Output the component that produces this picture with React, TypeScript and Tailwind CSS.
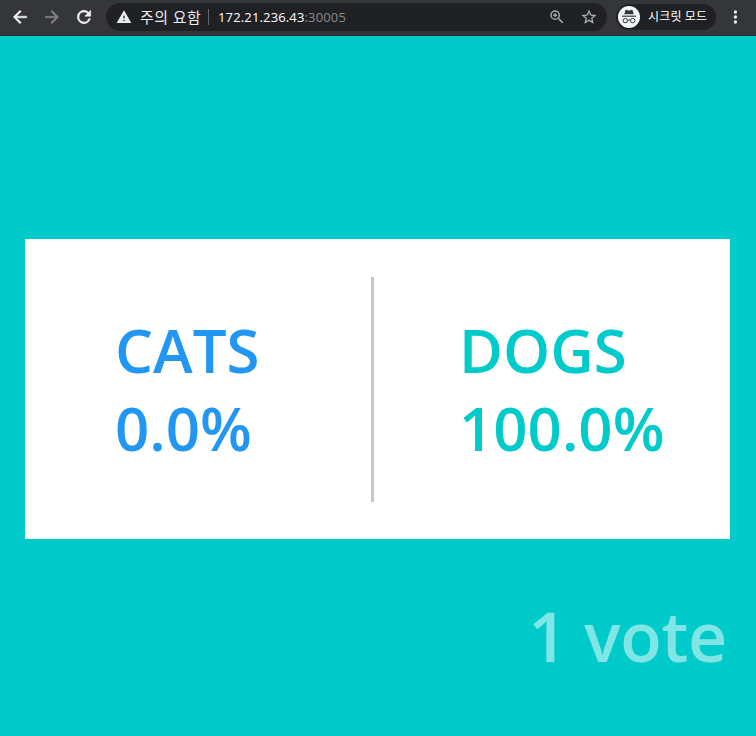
import type { ReactNode } from "react";

const chromeFont = "font-['Open_Sans','Noto_Sans_CJK_KR',sans-serif]";

function Icon({ size, className = "", children }: { size: number; className?: string; children: ReactNode }) {
  return (
    <svg width={size} height={size} viewBox="0 0 24 24" fill="currentColor" className={`block shrink-0 ${className}`}>
      {children}
    </svg>
  );
}

function IncognitoAvatar() {
  return (
    <svg width="22" height="22" viewBox="0 0 22 22" className="block shrink-0">
      <circle cx="11" cy="11" r="11" fill="#f1f3f4" />
      <path d="M7.300 4.600q.3-.9 1.200-.7l2.500.6 2.500-.6q.9-.2 1.200.7L15.700 8.200H6.300z" fill="#35363a" />
      <path d="M4 9.600h14v1.200H4z" fill="#35363a" />
      <g fill="none" stroke="#35363a" strokeWidth="1">
        <circle cx="7.300" cy="14.600" r="2.200" />
        <circle cx="14.700" cy="14.600" r="2.200" />
        <path d="M9.500 14.300q1.500-.8 3 0" />
      </g>
    </svg>
  );
}

function Toolbar() {
  return (
    <header className={`flex h-9 shrink-0 items-start border-b border-[#28292c] bg-[#35363a] pt-[3px] ${chromeFont}`}>
      <div className="flex h-7 w-[106px] items-center gap-3 pl-[10px] text-[#f1f3f4]">
        <Icon size={20}><path stroke="currentColor" strokeWidth=".6" d="M20 11H7.830l5.590-5.590L12 4l-8 8 8 8 1.410-1.410L7.830 13H20z" /></Icon>
        <Icon size={20} className="text-[#85868a]"><path stroke="currentColor" strokeWidth=".4" d="M12 4l-1.410 1.410L16.170 11H4v2h12.170l-5.580 5.590L12 20l8-8z" /></Icon>
        <Icon size={20}><path stroke="currentColor" strokeWidth=".7" d="M17.650 6.350A7.960 7.960 0 0 0 12 4a8 8 0 1 0 7.730 10h-2.080A6 6 0 1 1 12 6c1.660 0 3.140.69 4.220 1.780L13 11h7V4z" /></Icon>
      </div>
      <div className="flex h-7 w-[501px] items-center rounded-full bg-[#202124] pl-[10px] pr-[9px] text-[13px] leading-7">
        <Icon size={16} className="text-[#e8eaed]"><path d="M1 21h22L12 2zm12-3h-2v-2h2zm0-4h-2v-4h2z" /></Icon>
        <span className="ml-2 w-[61px] whitespace-nowrap text-[15px] tracking-[0.4px] text-[#e8eaed]">주의 요함</span>
        <span className="ml-[7px] mr-[9px] h-4 w-px bg-[#66676a]" />
        <span className="grow whitespace-nowrap tracking-[0.15px] text-white">172.21.236.43<span className="text-[#898b8e]">:30005</span></span>
        <Icon size={18} className="mr-[14px] text-[#a5a8ac]">
          <path d="M15.500 14h-.79l-.28-.27A6.470 6.470 0 0 0 16 9.500 6.500 6.500 0 1 0 9.500 16c1.610 0 3.090-.59 4.230-1.570l.27.28v.79l5 4.990L20.490 19zm-6 0a4.500 4.500 0 1 1 0-9 4.500 4.500 0 0 1 0 9zM10.500 7h-2v1.500H7v2h1.500V12h2v-1.500H12v-2h-1.500z" />
        </Icon>
        <Icon size={18} className="text-[#b5b8bc]">
          <path d="M22 9.240l-7.190-.62L12 2 9.190 8.630 2 9.240l5.460 4.730L5.820 21 12 17.270 18.180 21l-1.630-7.030zM12 15.400l-3.760 2.270 1-4.280-3.320-2.880 4.380-.38L12 6.100l1.710 4.040 4.380.38-3.320 2.880 1 4.280z" />
        </Icon>
      </div>
      <div className="ml-[9px] mt-px flex h-[26px] w-[100px] items-center rounded-full bg-[#202124] pl-[2px]">
        <IncognitoAvatar />
        <span className="ml-2 whitespace-nowrap text-[12px] leading-[26px] tracking-[0.15px] text-white">시크릿 모드</span>
      </div>
      <Icon size={20} className="ml-[9px] mt-1 text-[#e8eaed]">
        <circle cx="12.500" cy="6" r="2" /><circle cx="12.500" cy="12" r="2" /><circle cx="12.500" cy="18" r="2" />
      </Icon>
    </header>
  );
}

function Choice({ label, share, className }: { label: string; share: string; className: string }) {
  return (
    <div className={`text-[60px] leading-[78px] font-semibold whitespace-nowrap ${className}`}>
      <div>{label}</div>
      <div>{share}</div>
    </div>
  );
}

export default function App() {
  return (
    <div className="flex h-[736px] w-[756px] flex-col overflow-hidden bg-[#00cbca]">
      <Toolbar />
      <main className="flex flex-col pt-[203px] font-['Open_Sans',sans-serif]">
        <section className="ml-[25px] flex h-[300px] w-[705px] items-center bg-white">
          <Choice label="CATS" share="0.0%" className="w-[346px] pl-[90px] text-[#2196f3]" />
          <div className="h-[225px] w-[3px] bg-[#c0c9ce]" />
          <Choice label="DOGS" share="100.0%" className="pl-[85px] text-[#00cbca]" />
        </section>
        <footer className="pr-[29px] pt-[51px] text-right text-[68px] leading-[92px] font-semibold tracking-[-0.3px] text-white/50">
          1 vote
        </footer>
      </main>
    </div>
  );
}
